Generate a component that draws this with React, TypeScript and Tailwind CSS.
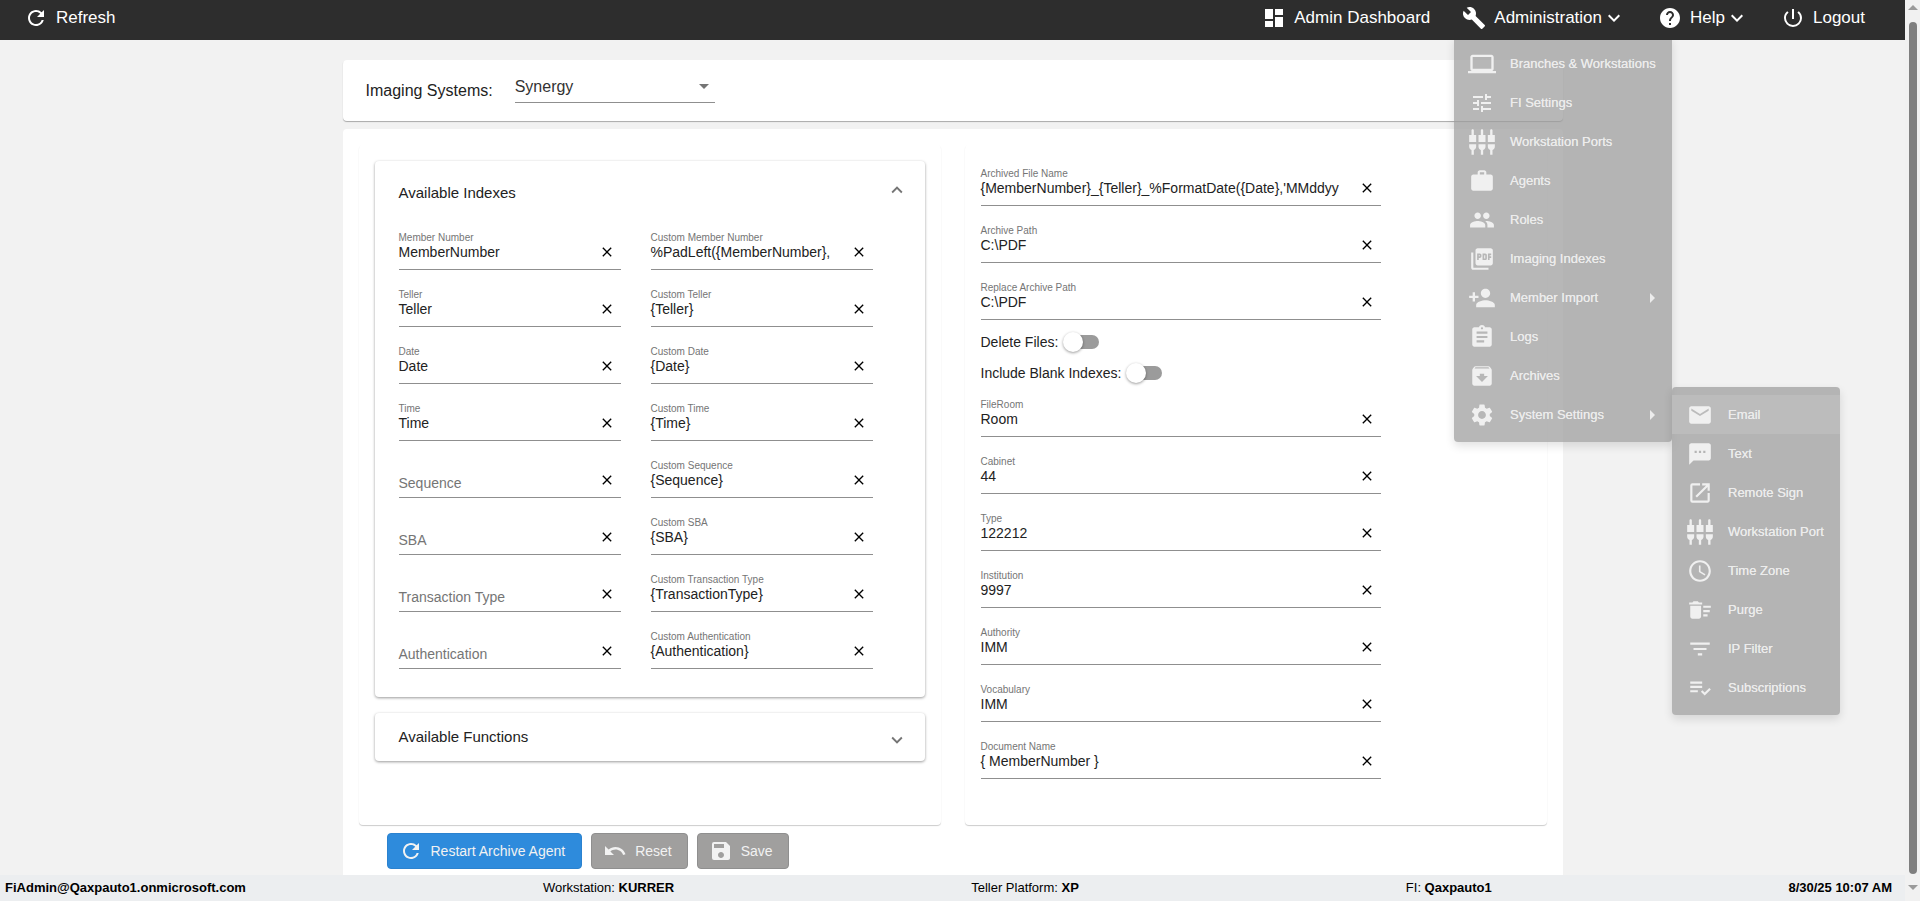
import type { ReactNode } from 'react'
import {
  MdRefresh, MdDashboard, MdBuild, MdHelp, MdPowerSettingsNew, MdKeyboardArrowDown, MdClose,
  MdArrowDropDown, MdExpandLess, MdExpandMore, MdUndo, MdSave, MdLaptop, MdTune,
  MdSettingsInputComposite, MdWork, MdPeople, MdPictureAsPdf, MdPersonAdd, MdAssignment,
  MdArchive, MdSettings, MdArrowRight, MdEmail, MdTextsms, MdOpenInNew, MdAccessTime,
  MdDeleteSweep, MdFilterList, MdPlaylistAddCheck,
} from 'react-icons/md'

const indexes = [
  { label: 'Member Number', value: 'MemberNumber', customLabel: 'Custom Member Number', custom: '%PadLeft({MemberNumber},' },
  { label: 'Teller', value: 'Teller', customLabel: 'Custom Teller', custom: '{Teller}' },
  { label: 'Date', value: 'Date', customLabel: 'Custom Date', custom: '{Date}' },
  { label: 'Time', value: 'Time', customLabel: 'Custom Time', custom: '{Time}' },
  { label: 'Sequence', value: '', customLabel: 'Custom Sequence', custom: '{Sequence}' },
  { label: 'SBA', value: '', customLabel: 'Custom SBA', custom: '{SBA}' },
  { label: 'Transaction Type', value: '', customLabel: 'Custom Transaction Type', custom: '{TransactionType}' },
  { label: 'Authentication', value: '', customLabel: 'Custom Authentication', custom: '{Authentication}' },
]

const adminMenu = [
  { icon: <MdLaptop size={28} />, label: 'Branches & Workstations' },
  { icon: <MdTune size={24} />, label: 'FI Settings' },
  { icon: <MdSettingsInputComposite size={28} />, label: 'Workstation Ports' },
  { icon: <MdWork size={26} />, label: 'Agents' },
  { icon: <MdPeople size={26} />, label: 'Roles' },
  { icon: <MdPictureAsPdf size={26} />, label: 'Imaging Indexes' },
  { icon: <MdPersonAdd size={28} />, label: 'Member Import', arrow: true },
  { icon: <MdAssignment size={26} />, label: 'Logs' },
  { icon: <MdArchive size={26} />, label: 'Archives' },
  { icon: <MdSettings size={26} />, label: 'System Settings', arrow: true },
]

const systemMenu = [
  { icon: <MdEmail size={26} />, label: 'Email', active: true },
  { icon: <MdTextsms size={26} />, label: 'Text' },
  { icon: <MdOpenInNew size={26} />, label: 'Remote Sign' },
  { icon: <MdSettingsInputComposite size={28} />, label: 'Workstation Port' },
  { icon: <MdAccessTime size={26} />, label: 'Time Zone' },
  { icon: <MdDeleteSweep size={26} />, label: 'Purge' },
  { icon: <MdFilterList size={26} />, label: 'IP Filter' },
  { icon: <MdPlaylistAddCheck size={26} />, label: 'Subscriptions' },
]

function Field({ label, value, width }: { label: string; value: string; width: string }) {
  return (
    <div className={`${width} h-[39px] flex flex-col border-b border-[#8f8f8f]`}>
      {value ? (
        <>
          <div className="h-[12px] mt-[1px] text-[10px] leading-[12px] text-[#757575] whitespace-nowrap">{label}</div>
          <div className="flex items-center h-[20px] mt-[-2px]">
            <span className="flex-1 whitespace-nowrap text-[14px] leading-[20px] text-[#222]">{value}</span>
            <MdClose size={16} className="mr-[6px] shrink-0 text-black" />
          </div>
        </>
      ) : (
        <div className="flex items-center h-[20px] mt-[11px]">
          <span className="flex-1 text-[14px] leading-[20px] mt-[5px] text-[#757575]">{label}</span>
          <MdClose size={16} className="mr-[6px] shrink-0 text-black" />
        </div>
      )}
    </div>
  )
}

function Toggle({ label }: { label: string }) {
  return (
    <div className="flex items-center h-[20px] text-[14px] text-[#222]">
      <span>{label}</span>
      <div className="relative ml-[5px] w-[36px] h-[20px] flex items-center">
        <div className="ml-[4px] w-[32px] h-[14px] rounded-full bg-[#9b9b9b]" />
        <div className="absolute left-0 top-0 w-[20px] h-[20px] rounded-full bg-white shadow-[0_1px_3px_rgba(0,0,0,0.4)]" />
      </div>
    </div>
  )
}

function ActionButton({ icon, label, blue }: { icon: ReactNode; label: string; blue?: boolean }) {
  return (
    <button className={`flex items-center h-[36px] pl-[11px] gap-[8px] rounded-[4px] text-[14px] text-[#f2f2f2] border ${blue ? 'pr-[16px] bg-[#2e8bdc] border-[#2b82cf]' : 'pr-[15px] bg-[#a09f9e] border-[#8f8f8f]'}`}>
      {icon}
      {label}
    </button>
  )
}

function MenuRow({ icon, label, arrow, active, iconBox }: { icon: ReactNode; label: string; arrow?: boolean; active?: boolean; iconBox: string }) {
  return (
    <div className={`flex items-center h-[39px] text-[13px] font-medium text-[#ececec] ${active ? 'bg-[#bcbcbc]' : ''}`}>
      <div className={`${iconBox} flex justify-center text-[#f0f0f0]`}>{icon}</div>
      <span className="flex-1 whitespace-nowrap [text-shadow:0_0_0.4px_#ececec]">{label}</span>
      {arrow && <MdArrowRight size={24} className="mr-[8px]" />}
    </div>
  )
}

export default function App() {
  return (
    <div className="relative flex w-[1920px] h-[901px] overflow-hidden bg-[#f2f2f2] font-['Liberation_Sans',Arial,sans-serif]">
      <div className="flex flex-col w-[1905px] h-full">
        {/* barra superior */}
        <nav className="relative z-20 flex items-center h-[40px] pb-[4px] shrink-0 bg-[#2d2d2d] text-[17px] text-white">
          <MdRefresh size={24} className="ml-[24px]" />
          <span className="ml-[8px]">Refresh</span>
          <div className="ml-auto mr-[40px] flex items-center">
            <MdDashboard size={24} />
            <span className="ml-[8px]">Admin Dashboard</span>
            <MdBuild size={24} className="ml-[32px]" />
            <span className="ml-[8px]">Administration</span>
            <MdKeyboardArrowDown size={24} />
            <MdHelp size={24} className="ml-[32px]" />
            <span className="ml-[8px]">Help</span>
            <MdKeyboardArrowDown size={24} />
            <MdPowerSettingsNew size={24} className="ml-[32px]" />
            <span className="ml-[8px]">Logout</span>
          </div>
        </nav>

        <main className="flex-1 min-h-0 overflow-hidden">
          <div className="mx-auto w-[1220px] pt-[20px] flex flex-col gap-[8px]">
            <div className="flex h-[61px] pl-[23px] rounded-[4px] bg-white shadow-[0_1px_1px_rgba(0,0,0,0.3)]">
              <span className="mt-[20px] text-[16px] leading-[22px] text-[#222]">Imaging Systems:</span>
              <div className="relative ml-[22px] mt-[17px] w-[200px] h-[26px] flex border-b border-[#8f8f8f] text-[16px] leading-[20px] text-[#333]">
                Synergy
                <MdArrowDropDown size={24} className="absolute right-[-1px] top-[-3px] text-[#757575]" />
              </div>
            </div>

            <div className="h-[746px] rounded-t-[4px] bg-white px-[16px] pt-[16px]">
              <div className="flex gap-[24px]">
                {/* coluna esquerda */}
                <div className="w-[582px] h-[680px] rounded-[4px] bg-white px-[16px] pt-[16px] shadow-[0_1px_1px_rgba(0,0,0,0.2)]">
                  <section className="h-[536px] rounded-[4px] bg-white px-[24px] shadow-[0_1px_3px_rgba(0,0,0,0.4)]">
                    <div className="flex items-center justify-between h-[51px] pt-[7px] text-[15px] text-[#222]">
                      <span className="mt-[6px]">Available Indexes</span>
                      <MdExpandLess size={22} className="mr-[-7px] text-[#757575]" />
                    </div>
                    <div className="grid grid-cols-[222px_222px] gap-x-[30px] gap-y-[18px] pt-[19px]">
                      {indexes.map(row => (
                        <div key={row.label} className="contents">
                          <Field label={row.label} value={row.value} width="w-[222px]" />
                          <Field label={row.customLabel} value={row.custom} width="w-[222px]" />
                        </div>
                      ))}
                    </div>
                  </section>
                  <section className="mt-[16px] flex items-center justify-between h-[48px] rounded-[4px] bg-white px-[24px] shadow-[0_1px_3px_rgba(0,0,0,0.4)] text-[15px] text-[#222]">
                    <span>Available Functions</span>
                    <MdExpandMore size={22} className="mr-[-7px] mt-[6px] text-[#757575]" />
                  </section>
                </div>

                {/* coluna direita */}
                <div className="w-[582px] h-[680px] rounded-[4px] bg-white px-[16px] pt-[22px] shadow-[0_1px_1px_rgba(0,0,0,0.2)]">
                  <div className="flex flex-col gap-[18px]">
                    <Field label="Archived File Name" value="{MemberNumber}_{Teller}_%FormatDate({Date},'MMddyy" width="w-[400px]" />
                    <Field label="Archive Path" value="C:\PDF" width="w-[400px]" />
                    <Field label="Replace Archive Path" value="C:\PDF" width="w-[400px]" />
                  </div>
                  <div className="flex flex-col gap-[11px] mt-[12px]">
                    <Toggle label="Delete Files:" />
                    <Toggle label="Include Blank Indexes:" />
                  </div>
                  <div className="flex flex-col gap-[18px] mt-[15px]">
                    <Field label="FileRoom" value="Room" width="w-[400px]" />
                    <Field label="Cabinet" value="44" width="w-[400px]" />
                    <Field label="Type" value="122212" width="w-[400px]" />
                    <Field label="Institution" value="9997" width="w-[400px]" />
                    <Field label="Authority" value="IMM" width="w-[400px]" />
                    <Field label="Vocabulary" value="IMM" width="w-[400px]" />
                    <Field label="Document Name" value="{ MemberNumber }" width="w-[400px]" />
                  </div>
                </div>
              </div>

              <div className="flex gap-[9px] mt-[8px] ml-[28px]">
                <ActionButton blue icon={<MdRefresh size={24} />} label="Restart Archive Agent" />
                <ActionButton icon={<MdUndo size={24} />} label="Reset" />
                <ActionButton icon={<MdSave size={24} />} label="Save" />
              </div>
            </div>
          </div>
        </main>

        <footer className="relative z-20 flex items-center h-[26px] shrink-0 bg-[#eceef0] text-[13px] text-black">
          <b className="ml-[5px]">FiAdmin@Qaxpauto1.onmicrosoft.com</b>
          <span className="ml-[297px]">Workstation: <b>KURRER</b></span>
          <span className="ml-[297px]">Teller Platform: <b>XP</b></span>
          <span className="ml-[327px]">FI: <b>Qaxpauto1</b></span>
          <b className="ml-auto mr-[13px]">8/30/25 10:07 AM</b>
        </footer>
      </div>

      {/* barra de rolagem */}
      <div className="relative z-20 flex flex-col items-center w-[15px] h-full bg-[#f1f1f1]">
        <div className="mt-[5px] w-0 h-0 border-x-[5px] border-x-transparent border-b-[5px] border-b-[#9a9a9a]" />
        <div className="mt-[12px] w-[8px] h-[852px] rounded-full bg-[#7f7f7f]" />
        <div className="mt-[11px] w-0 h-0 border-x-[5px] border-x-transparent border-t-[5px] border-t-[#9a9a9a]" />
      </div>

      {/* menus abertos */}
      <div className="absolute z-10 left-[1454px] top-[36px] w-[218px] py-[8px] rounded-[4px] bg-[rgba(155,155,155,0.72)] shadow-[0_4px_10px_rgba(0,0,0,0.12)]">
        {adminMenu.map(item => (
          <MenuRow key={item.label} {...item} iconBox="w-[56px]" />
        ))}
      </div>
      <div className="absolute z-10 left-[1672px] top-[387px] w-[168px] py-[8px] rounded-[4px] bg-[rgba(155,155,155,0.72)] shadow-[0_4px_10px_rgba(0,0,0,0.12)]">
        {systemMenu.map(item => (
          <MenuRow key={item.label} {...item} iconBox="w-[56px]" />
        ))}
      </div>
    </div>
  )
}
